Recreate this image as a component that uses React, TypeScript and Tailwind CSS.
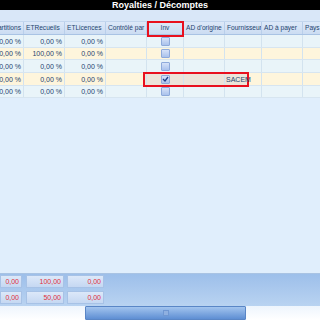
import React from "react";

type Col = { key: string; label: string; w: number; align: "left" | "right" | "center" };

const cols: Col[] = [
  { key: "rep", label: "Répartitions", w: 24, align: "right" },
  { key: "rec", label: "ETRecueils", w: 41, align: "right" },
  { key: "lic", label: "ETLicences", w: 41, align: "right" },
  { key: "ctrl", label: "Contrôlé par", w: 41, align: "left" },
  { key: "inv", label: "Inv", w: 37, align: "center" },
  { key: "ado", label: "AD d'origine", w: 41, align: "left" },
  { key: "four", label: "Fournisseur", w: 37, align: "left" },
  { key: "adp", label: "AD à payer", w: 41, align: "left" },
  { key: "pays", label: "Pays", w: 30, align: "left" },
];

const rows = [
  { rep: "0,00 %", rec: "0,00 %", lic: "0,00 %", checked: false, four: "", h: 13, bg: "bg-[#e9f4f9]" },
  { rep: "0,00 %", rec: "100,00 %", lic: "0,00 %", checked: false, four: "", h: 12, bg: "bg-[#fef5dc]" },
  { rep: "0,00 %", rec: "0,00 %", lic: "0,00 %", checked: false, four: "", h: 13, bg: "bg-[#e9f4f9]" },
  { rep: "0,00 %", rec: "0,00 %", lic: "0,00 %", checked: true, four: "SACEM", h: 13, bg: "bg-[#fef5dc]" },
  { rep: "0,00 %", rec: "0,00 %", lic: "0,00 %", checked: false, four: "", h: 12, bg: "bg-[#e9f4f9]" },
];

function Check({ on }: { on: boolean }) {
  return (
    <span className="relative z-10 grid h-[9px] w-[9px] place-items-center rounded-[1px] border border-[#8eaadb] bg-gradient-to-b from-[#d6e2f8] to-[#aac2ec]">
      {on && (
        <svg width="7" height="6" viewBox="0 0 7 6" className="block">
          <path d="M1 3 L3 5 L6 1" stroke="#1d3f8a" strokeWidth="1.3" fill="none" />
        </svg>
      )}
    </span>
  );
}

export default function App() {
  return (
    <div
      className="relative flex h-[320px] w-[320px] flex-col overflow-hidden bg-[#e0eefc] text-[#24446f]"
      style={{ fontFamily: '"Liberation Sans", Arial, sans-serif' }}
    >
      {/* title bar */}
      <div className="h-[10px] shrink-0 bg-black text-center text-[9px] font-bold leading-[10px] text-white">
        Royalties / Décomptes
      </div>

      {/* group-by strip */}
      <div className="h-[12px] shrink-0 border-b border-[#c3d6ee] bg-[#d9e7f8]" />

      {/* header */}
      <div className="flex h-[13px] shrink-0 border-b border-[#a9c3e4] bg-gradient-to-b from-[#dde9f9] to-[#cbdcf2]">
        {cols.map((c) => (
          <div
            key={c.key}
            style={{ width: c.w }}
            className={`flex shrink-0 items-center overflow-hidden whitespace-nowrap border-r border-[#b9cfeb] text-[6.6px] leading-none ${
              c.key === "rep" ? "justify-end pr-[2px]" : c.key === "inv" ? "justify-center" : "pl-[2px]"
            }`}
          >
            {c.label}
          </div>
        ))}
      </div>

      {/* rows */}
      {rows.map((r, i) => (
        <div
          key={i}
          style={{ height: r.h }}
          className={`relative flex shrink-0 border-b border-[#d7e5f0] ${r.bg}`}
        >
          {r.checked && <div className="absolute left-[143px] top-0 h-full w-[106px] bg-[#ece4d9]" />}
          {cols.map((c) => {
            const val =
              c.key === "rep" ? r.rep : c.key === "rec" ? r.rec : c.key === "lic" ? r.lic : c.key === "four" ? r.four : "";
            return (
              <div
                key={c.key}
                style={{ width: c.w }}
                className={`relative flex shrink-0 items-center overflow-hidden whitespace-nowrap border-r border-[#d3e3ef] text-[7px] leading-none ${
                  c.align === "right" ? "justify-end pr-[2px]" : c.align === "center" ? "justify-center" : "pl-[1px]"
                }`}
              >
                {c.key === "inv" ? <Check on={r.checked} /> : <span className="relative z-10">{val}</span>}
              </div>
            );
          })}
        </div>
      ))}

      <div className="flex-1" />

      {/* summary footer */}
      <div className="flex h-[33px] shrink-0 flex-col gap-[3px] border-t border-[#a9c3e3] bg-gradient-to-b from-[#9dbfea] to-[#b9d3f1] pt-[1px]">
        {[
          ["0,00", "100,00", "0,00"],
          ["0,00", "50,00", "0,00"],
        ].map((line, i) => (
          <div key={i} className="flex h-[13px] text-[7px] leading-none text-[#e1303c]">
            <div className="flex w-[22px] items-center justify-end border border-[#a7c2e6] bg-gradient-to-b from-[#dce8f9] to-[#c5d8f2] pr-[2px]">
              {line[0]}
            </div>
            <div className="ml-[4px] flex w-[38px] items-center justify-end border border-[#a7c2e6] bg-gradient-to-b from-[#dce8f9] to-[#c5d8f2] pr-[2px]">
              {line[1]}
            </div>
            <div className="ml-[3px] flex w-[37px] items-center justify-end border border-[#a7c2e6] bg-gradient-to-b from-[#dce8f9] to-[#c5d8f2] pr-[2px]">
              {line[2]}
            </div>
          </div>
        ))}
      </div>

      {/* horizontal scrollbar */}
      <div className="flex h-[14px] shrink-0">
        <div className="w-[85px] bg-gradient-to-b from-[#eef5fd] to-white" />
        <div className="flex w-[161px] items-center justify-center rounded-[1px] border border-[#5a86c6] bg-gradient-to-b from-[#a3c4ee] to-[#5e8ed3]">
          <span className="h-[4px] w-[4px] bg-[#8fb0e0] ring-1 ring-[#6f97d2]" />
        </div>
        <div className="flex-1 bg-gradient-to-b from-[#eef5fd] to-white" />
      </div>

      {/* red highlight boxes */}
      <div className="absolute left-[147px] top-[21px] h-[16px] w-[37px] border-2 border-[#e8101e]" />
      <div className="absolute left-[143px] top-[72px] h-[15px] w-[106px] border-2 border-[#e8101e]" />
    </div>
  );
}
